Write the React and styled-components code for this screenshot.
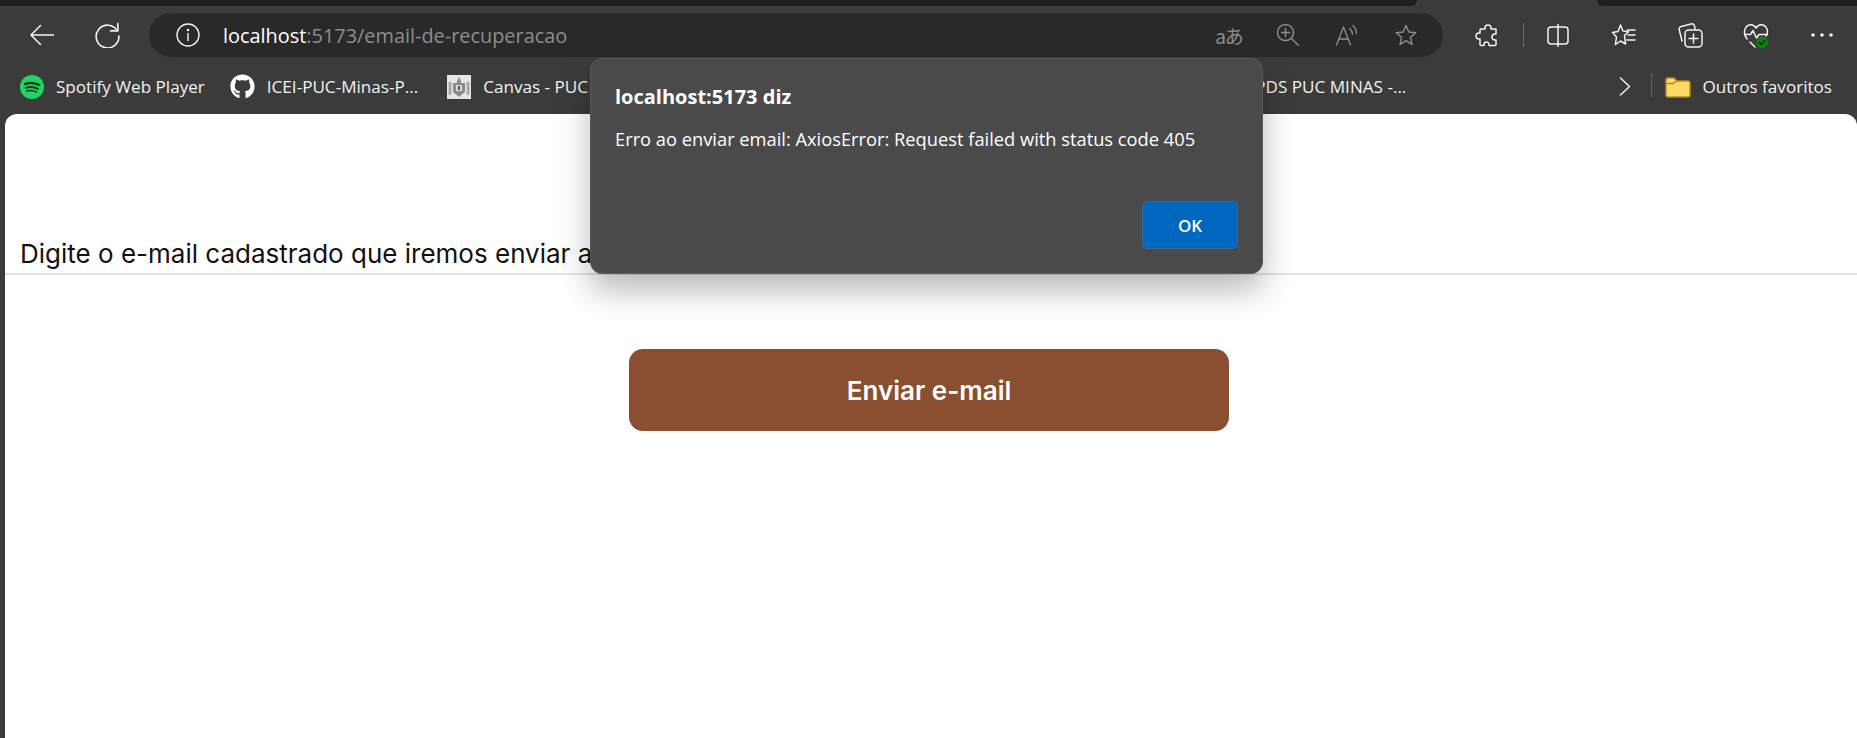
import React from 'react';
import styled, { createGlobalStyle } from 'styled-components';
import { FaGithub } from 'react-icons/fa';

const Global = createGlobalStyle`
  html, body { margin: 0; padding: 0; background: #3b3b3b; }
  #root { height: 738px; overflow: hidden; }
`;

const uiFont = `"Open Sans", "Noto Sans", "Liberation Sans", sans-serif`;

const Window = styled.div`
  position: relative;
  height: 738px;
  width: 1857px;
  display: flex;
  flex-direction: column;
  background: #3b3b3b;
  overflow: hidden;
`;

const TabStrip = styled.div`
  height: 6px;
  display: flex;
  justify-content: space-between;
`;
const InactiveTabs = styled.div`
  height: 6px;
  background: #1f1f1f;
  width: ${p => p.$w}px;
  border-radius: ${p => p.$r};
`;

const Toolbar = styled.div`
  height: 58px;
  display: flex;
  align-items: center;
  padding-left: 17px;
  color: #f2f2f2;
  flex: none;
`;
const ToolButton = styled.div`
  width: 48px;
  height: 36px;
  display: flex;
  align-items: center;
  justify-content: center;
  flex: none;
  margin-right: 18px;
`;
const AddressPill = styled.div`
  width: 1294px;
  height: 44px;
  border-radius: 22px;
  background: #292929;
  display: flex;
  align-items: center;
  padding: 0 25px 0 27px;
  box-sizing: border-box;
  flex: none;
  margin-right: 19px;
`;
const Url = styled.div`
  margin-left: 23px;
  font: 400 19.9px ${uiFont};
  color: #fff;
  span { color: #8d8d8d; }
`;
const PillActions = styled.div`
  margin-left: auto;
  display: flex;
  align-items: center;
  gap: 35px;
  color: #8e8e8e;
`;
const PillIcon = styled.div`
  width: 24px;
  height: 24px;
  display: flex;
  align-items: center;
  justify-content: center;
  white-space: nowrap;
`;
const TranslateGlyph = styled.span`
  font: 400 19px "Noto Sans CJK JP", "Noto Sans", sans-serif;
  letter-spacing: -1px;
  color: #8e8e8e;
`;
const VDivider = styled.div`
  width: 1px;
  height: 24px;
  background: #6a6a6a;
  margin-right: 10px;
  margin-left: -5px;
  flex: none;
`;

const Bookmarks = styled.div`
  height: 50px;
  box-sizing: border-box;
  padding: 0 0 5px 20px;
  display: flex;
  align-items: center;
  flex: none;
  color: #f2f2f2;
`;
const Bookmark = styled.div`
  display: flex;
  align-items: center;
  gap: 12px;
  margin-right: ${p => p.$after ?? 25}px;
  flex: none;
  white-space: nowrap;
  font: 400 17.1px ${uiFont};
`;
const Spacer = styled.div`
  flex: 1;
`;
const Chevron = styled.div`
  width: 12px;
  margin-left: 213px;
  display: flex;
`;
const BarDivider = styled.div`
  width: 1px;
  height: 24px;
  margin: -4px 13px 0 20px;
  background: #5e5e5e;
`;
const FolderLabel = styled(Bookmark)`
  gap: 11px;
`;

const Page = styled.main`
  flex: 1;
  margin-left: 5px;
  background: #fff;
  border-radius: 12px 12px 0 0;
  display: flex;
  flex-direction: column;
`;
const Header = styled.header`
  height: 161px;
  box-sizing: border-box;
  display: flex;
  align-items: flex-end;
  padding: 0 0 4px 15px;
  border-bottom: 2px solid #e3e3e6;
`;
const Lead = styled.p`
  margin: 0;
  font: 400 26px Inter, sans-serif;
  color: #111;
  white-space: nowrap;
`;
const Form = styled.form`
  display: flex;
  justify-content: center;
  padding: 74px 4px 0 0;
`;
const Submit = styled.button`
  width: 600px;
  height: 82px;
  border: none;
  border-radius: 14px;
  background: #8a4f30;
  color: #fff;
  font: 600 26px Inter, sans-serif;
`;

const Alert = styled.div`
  position: absolute;
  left: 590px;
  top: 58px;
  width: 673px;
  height: 216px;
  box-sizing: border-box;
  background: #4a4a4a;
  border: 1px solid #5a5a5a;
  border-radius: 12px;
  box-shadow: 0 16px 32px rgba(0, 0, 0, 0.28);
  padding: 25px 24px 24px 24px;
  color: #fff;
  display: flex;
  flex-direction: column;
  font-family: ${uiFont};
`;
const AlertTitle = styled.div`
  font-weight: 700;
  font-size: 20px;
  line-height: 26px;
`;
const AlertMessage = styled.div`
  margin-top: 16px;
  font-size: 18.3px;
  line-height: 26px;
  white-space: nowrap;
`;
const AlertActions = styled.div`
  margin-top: auto;
  display: flex;
  justify-content: flex-end;
`;
const AlertOk = styled.button`
  width: 96px;
  height: 48px;
  border: 1px solid #3f6a8c;
  border-radius: 5px;
  background: #0067c0;
  color: #fff;
  font: 600 17px ${uiFont};
`;

const S = ({ w = 24, h = 24, sw = 1.5, children, vb = '0 0 24 24' }) => (
  <svg width={w} height={h} viewBox={vb} fill="none" stroke="currentColor" strokeWidth={sw} strokeLinecap="round" strokeLinejoin="round">{children}</svg>
);

const StarPath = "M12 2.5 L14.8 9 L21.8 9.7 L16.5 14.3 L18 21.3 L12 17.6 L6 21.3 L7.5 14.3 L2.2 9.7 L9.2 9 Z";

const Spotify = () => (
  <svg width="24" height="24" viewBox="0 0 24 24" fill="none">
    <circle cx="12" cy="12" r="12" fill="#1ed760" />
    <g stroke="#1b3a26" strokeLinecap="round">
      <path d="M5 9 C10 7.4 15 7.8 19.3 10" strokeWidth="2.4" />
      <path d="M5.9 12.7 C10 11.5 14.4 11.9 18 13.8" strokeWidth="2" />
      <path d="M6.8 16 C10.2 15.1 13.6 15.4 16.6 17" strokeWidth="1.6" />
    </g>
  </svg>
);

const Crest = () => (
  <svg width="24" height="24" viewBox="0 0 24 24">
    <rect width="24" height="24" fill="#e6e6e2" />
    <path d="M12 2 L14 6 L14 8 L18 8 L18 17 L12 22 L6 17 L6 8 L10 8 L10 6 Z" fill="#8b8d8b" />
    <rect x="1.5" y="7" width="3" height="13" fill="#a9aba8" />
    <rect x="19.5" y="7" width="3" height="13" fill="#a9aba8" />
    <rect x="9" y="10" width="6" height="6" fill="#d8d8d4" />
    <rect x="11" y="11" width="2" height="4" fill="#5a5c5a" />
  </svg>
);

const Folder = () => (
  <svg width="26" height="22" viewBox="0 0 26 22">
    <path d="M1 4 a2 2 0 0 1 2-2 h6 l3 3 h11 a2 2 0 0 1 2 2 v12 a2 2 0 0 1-2 2 H3 a2 2 0 0 1-2-2 Z" fill="#ffd966" stroke="#b98a1f" strokeWidth="1.5" />
    <path d="M1.5 7.5 h7 l3-2.5" fill="none" stroke="#b98a1f" strokeWidth="1.5" />
  </svg>
);

export default function App() {
  return (
    <Window>
      <Global />
      <TabStrip>
        <InactiveTabs $w={1417} $r="0 0 10px 0" />
        <InactiveTabs $w={260} $r="0 0 0 10px" />
      </TabStrip>
      <Toolbar>
        <ToolButton>
          <S w={26} h={24}><path d="M25 12 H2 M11.5 2.5 L2 12 L11.5 21.5" /></S>
        </ToolButton>
        <ToolButton>
          <S w={26} h={26}><path d="M21.5 8 A10.5 10.5 0 1 0 23 13" /><path d="M22 1.5 V8.2 H15.3" /></S>
        </ToolButton>
        <AddressPill>
          <S w={24} h={24} sw={1.4}><circle cx="12" cy="12" r="11" /><path d="M12 10.5 V17.5" /><circle cx="12" cy="7" r="0.6" fill="currentColor" /></S>
          <Url>localhost<span>:5173/email-de-recuperacao</span></Url>
          <PillActions>
            <PillIcon><TranslateGlyph>aあ</TranslateGlyph></PillIcon>
            <PillIcon>
              <S w={24} h={24} sw={1.4}><circle cx="9.5" cy="9.5" r="8" /><path d="M15.5 15.5 L22.5 22.5 M9.5 5.5 V13.5 M5.5 9.5 H13.5" /></S>
            </PillIcon>
            <PillIcon>
              <S w={24} h={24} sw={1.3}><path d="M1.5 22 L8.5 4 L15.5 22 M4 16 H13" /><path d="M14.5 5.5 C16.5 7 17.5 9 17.5 11 M18 2.5 C20.5 5 21.5 7.5 21.5 10.5" /></S>
            </PillIcon>
            <PillIcon>
              <S w={24} h={24} sw={1.4}><path d={StarPath} /></S>
            </PillIcon>
          </PillActions>
        </AddressPill>
        <ToolButton>
          <S w={24} h={24} sw={1.5} vb="-2 0 24 24"><path d="M9 5 a3 3 0 0 1 6 0 V6 h5 v5 h-1 a3 3 0 0 0 0 6 h1 v4.5 a1 1 0 0 1-1 1 H13 v-1 a2.5 2.5 0 0 0-5 0 v1 H5 a1 1 0 0 1-1-1 V16 h-1 a3 3 0 0 1 0-6 h1 V7 a1 1 0 0 1 1-1 h4 Z" /></S>
        </ToolButton>
        <VDivider />
        <ToolButton>
          <S w={24} h={24} sw={1.5}><rect x="2" y="4" width="20" height="17" rx="3" /><path d="M12 1.5 V23.5" /></S>
        </ToolButton>
        <ToolButton>
          <S w={26} h={24} sw={1.5} vb="0 0 26 24"><path d="M9.5 2 L12 8 L17.5 8.6 L13.5 12.5 L14.6 21 L9.5 18 L4.4 21.5 L5.5 14 L1.5 9.6 L7 8.5 Z" /><path d="M16.5 7 H24 M17 12 H24 M16 17 H24" /></S>
        </ToolButton>
        <ToolButton>
          <S w={26} h={26} sw={1.5} vb="0 0 26 26"><path d="M5 19 L2.3 8 a3 3 0 0 1 2-3.6 L14 2 a3 3 0 0 1 3.6 2 L18 7" /><rect x="8" y="8" width="17" height="17" rx="3.5" /><path d="M16.5 12 V21 M12 16.5 H21" /></S>
        </ToolButton>
        <ToolButton>
          <S w={26} h={27} sw={1.5} vb="0 0 26 27">
            <path d="M4 17 C1 13 1 9 2.5 6 C5 1.5 10.5 2 13 6 C15.5 2 21 1.5 23.5 6 C25 9 24.5 12 23 14" />
            <path d="M1.5 12.5 H7.5 L10 8.5 L13.5 16 L16 12.5 H24.5" />
            <path d="M7 20 L12 25" />
            <circle cx="19" cy="20.5" r="6" fill="#107c10" stroke="none" />
            <path d="M16.5 20.5 L18.4 22.5 L21.8 18.6" stroke="#111" strokeWidth="1.2" />
          </S>
        </ToolButton>
        <ToolButton>
          <svg width="22" height="4" viewBox="0 0 22 4" fill="currentColor"><circle cx="2" cy="2" r="1.8" /><circle cx="11" cy="2" r="1.8" /><circle cx="20" cy="2" r="1.8" /></svg>
        </ToolButton>
      </Toolbar>
      <Bookmarks>
        <Bookmark><Spotify />Spotify Web Player</Bookmark>
        <Bookmark $after={29}><FaGithub size={25} color="#fff" />ICEI-PUC-Minas-P...</Bookmark>
        <Bookmark><Crest />Canvas - PUC Minas</Bookmark>
        <Spacer />
        <Bookmark $after={0}>PDS PUC MINAS -...</Bookmark>
        <Chevron>
          <svg width="12" height="19" viewBox="0 0 12 19" fill="none" stroke="currentColor" strokeWidth="1.5" strokeLinecap="round" strokeLinejoin="round"><path d="M1.5 1 L10.5 9.5 L1.5 18" /></svg>
        </Chevron>
        <BarDivider />
        <FolderLabel><Folder />Outros favoritos</FolderLabel>
      </Bookmarks>
      <Page>
        <Header>
          <Lead>Digite o e-mail cadastrado que iremos enviar as instruções de recuperação</Lead>
        </Header>
        <Form onSubmit={e => e.preventDefault()}>
          <Submit type="submit">Enviar e-mail</Submit>
        </Form>
      </Page>
      <Alert role="alertdialog">
        <AlertTitle>localhost:5173 diz</AlertTitle>
        <AlertMessage>Erro ao enviar email: AxiosError: Request failed with status code 405</AlertMessage>
        <AlertActions><AlertOk type="button">OK</AlertOk></AlertActions>
      </Alert>
    </Window>
  );
}
